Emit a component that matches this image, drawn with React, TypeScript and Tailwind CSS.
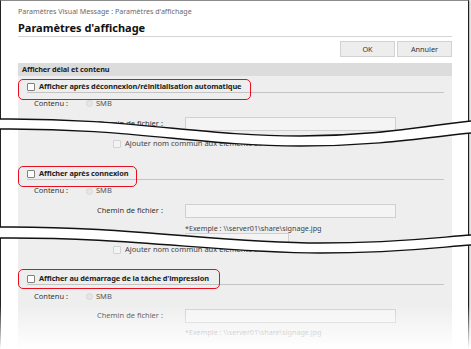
import React from "react";

function Box({ dim }: { dim?: boolean }) {
  return (
    <span
      className={
        dim
          ? "inline-block w-[8px] h-[8px] shrink-0 rounded-[1px] border border-[#d2d2d2] bg-[#f3f3f3]"
          : "inline-block w-[8px] h-[8px] shrink-0 rounded-[1px] border border-[#808080] bg-white"
      }
    />
  );
}

function CheckRow({ label, redW, redTop, redH }: { label: string; redW: number; redTop: string; redH: string }) {
  return (
    <div className="relative ml-[9px] mr-[8px] h-[12px] flex items-center gap-[4px] border-b border-[#c4c4c4]">
      <Box />
      <span className="text-[7.4px] font-bold tracking-[-0.1px] text-[#222] leading-none">{label}</span>
      <span className={`absolute left-[-9px] ${redTop} ${redH} rounded-[5px] border-[1.5px] border-[#e50f1f]`} style={{ width: redW }} />
    </div>
  );
}

function Contenu({ h }: { h: string }) {
  return (
    <div className={`${h} flex items-center pl-[16px] text-[7.5px] text-[#333]`}>
      <span className="w-[52px]">Contenu :</span>
      <span className="w-[7px] h-[7px] rounded-full border border-[#d6d6d6] bg-[#e6e6e6]" />
      <span className="ml-[3px] text-[#555]">SMB</span>
    </div>
  );
}

function Chemin({ h }: { h: string }) {
  return (
    <div className={`${h} flex items-center pl-[79px] text-[7.5px] text-[#333]`}>
      <span className="w-[88px]">Chemin de fichier :</span>
      <span className="w-[211px] h-[14px] border border-[#d0d0d0] bg-[#f4f4f4]" />
    </div>
  );
}

function Exemple({ h, tone }: { h: string; tone: string }) {
  return (
    <div className={`${h} flex items-center pl-[167px] text-[7.2px] ${tone}`}>
      *Exemple : \\server01\share\signage.jpg
    </div>
  );
}

function Ajouter({ h }: { h: string }) {
  return (
    <div className={`${h} flex items-center gap-[4px] pl-[95px] text-[7.5px] text-[#444]`}>
      <Box dim />
      <span>Ajouter nom commun aux éléments de la liste</span>
    </div>
  );
}

export default function App() {
  return (
    <div className="relative w-[471px] h-[349px] overflow-hidden bg-white font-['Noto_Sans',sans-serif]">
      <div className="w-[469px] h-[349px] border-t border-t-[#8c8c8c] border-l border-l-[#222] border-r-[1.5px] border-r-[#1e1e1e] shadow-[1px_0_2px_rgba(0,0,0,0.35)] pl-[17px] pr-[16px]">
        <div className="h-[20px] flex items-center text-[7.1px] text-[#6a6a6a]">
          Paramètres Visual Message : Paramètres d'affichage
        </div>
        <div className="h-[16px] flex items-center border-b border-[#d4d4d4] text-[11px] font-bold text-[#111]">
          Paramètres d'affichage
        </div>
        <div className="mt-[4px] flex justify-end gap-[2px]">
          <button className="w-[55px] h-[16px] border border-[#d2d2d2] bg-[#ededed] text-[7.3px] text-[#333]">OK</button>
          <button className="w-[55px] h-[16px] border border-[#d2d2d2] bg-[#ededed] text-[7.3px] text-[#333]">Annuler</button>
        </div>

        <div className="mt-[6px] bg-[#eeeeee] h-[300px]">
          <div className="h-[13px] flex items-center px-[4px] bg-[#dcdcdc] text-[7.3px] tracking-[-0.1px] font-bold text-[#222]">
            Afficher délai et contenu
          </div>

          <div className="pt-[5px]">
            <CheckRow label="Afficher après déconnexion/réinitialisation automatique" redW={233} redTop="top-[-2px]" redH="h-[21px]" />
          </div>
          <Contenu h="h-[21px]" />
          <Chemin h="h-[20px]" />
          <Ajouter h="h-[20px]" />

          <div className="pt-[14px]">
            <CheckRow label="Afficher après connexion" redW={119} redTop="top-[-2px]" redH="h-[21px]" />
          </div>
          <Contenu h="h-[22px]" />
          <Chemin h="h-[18px]" />
          <Exemple h="h-[17px]" tone="text-[#444]" />
          <div className="h-[11px] pl-[167px]">
            <div className="-mt-[4px] w-[104px] h-[14px] border border-[#d0d0d0] bg-[#f4f4f4]" />
          </div>
          <Ajouter h="h-[12px]" />

          <div className="pt-[17px]">
            <CheckRow label="Afficher au démarrage de la tâche d'impression" redW={202} redTop="top-[-4px]" redH="h-[20px]" />
          </div>
          <Contenu h="h-[23px]" />
          <Chemin h="h-[15px]" />
          <Exemple h="h-[18px]" tone="text-[#8a8a8a]" />
        </div>
      </div>

      <svg className="absolute inset-0 pointer-events-none" width="471" height="349" viewBox="0 0 471 349">
        <path
          d="M0,119 C130,118 200,136 300,136 C380,136 430,125 471,121 L471,133 C430,137 380,146 300,146 C200,146 130,128 0,129 Z"
          fill="#fff"
        />
        <path d="M0,119 C130,118 200,136 300,136 C380,136 430,125 471,121" fill="none" stroke="#111" strokeWidth="1.4" />
        <path d="M0,129 C130,128 200,146 300,146 C380,146 430,137 471,133" fill="none" stroke="#111" strokeWidth="1.4" />

        <path
          d="M0,227 C130,226 220,243 320,243 C400,243 440,237 471,235 L471,245 C440,247 400,253 320,253 C220,253 130,237 0,238 Z"
          fill="#fff"
        />
        <path d="M0,227 C130,226 220,243 320,243 C400,243 440,237 471,235" fill="none" stroke="#111" strokeWidth="1.4" />
        <path d="M0,238 C130,237 220,253 320,253 C400,253 440,247 471,245" fill="none" stroke="#111" strokeWidth="1.4" />
      </svg>

      <div className="absolute left-0 right-0 bottom-0 h-[44px] bg-linear-to-b from-white/0 to-white" />
    </div>
  );
}
